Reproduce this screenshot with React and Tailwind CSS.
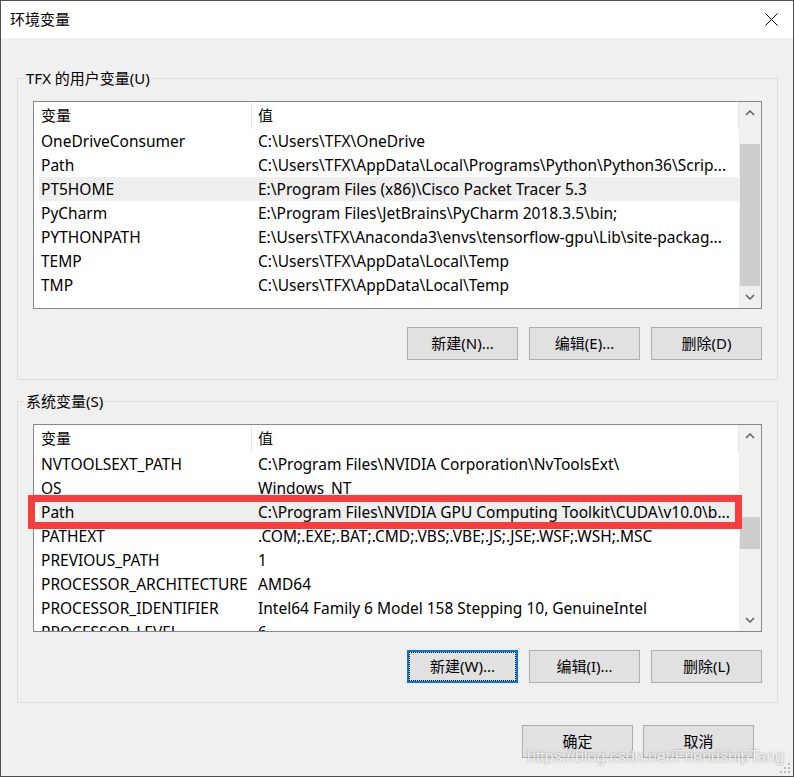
const userVars = [
  { name: "OneDriveConsumer", value: "C:\\Users\\TFX\\OneDrive" },
  { name: "Path", value: "C:\\Users\\TFX\\AppData\\Local\\Programs\\Python\\Python36\\Scrip..." },
  { name: "PT5HOME", value: "E:\\Program Files (x86)\\Cisco Packet Tracer 5.3", active: true },
  { name: "PyCharm", value: "E:\\Program Files\\JetBrains\\PyCharm 2018.3.5\\bin;" },
  { name: "PYTHONPATH", value: "E:\\Users\\TFX\\Anaconda3\\envs\\tensorflow-gpu\\Lib\\site-packag..." },
  { name: "TEMP", value: "C:\\Users\\TFX\\AppData\\Local\\Temp" },
  { name: "TMP", value: "C:\\Users\\TFX\\AppData\\Local\\Temp" },
];

const systemVars = [
  { name: "NVTOOLSEXT_PATH", value: "C:\\Program Files\\NVIDIA Corporation\\NvToolsExt\\" },
  { name: "OS", value: "Windows_NT" },
  { name: "Path", value: "C:\\Program Files\\NVIDIA GPU Computing Toolkit\\CUDA\\v10.0\\b...", active: true },
  { name: "PATHEXT", value: ".COM;.EXE;.BAT;.CMD;.VBS;.VBE;.JS;.JSE;.WSF;.WSH;.MSC" },
  { name: "PREVIOUS_PATH", value: "1" },
  { name: "PROCESSOR_ARCHITECTURE", value: "AMD64" },
  { name: "PROCESSOR_IDENTIFIER", value: "Intel64 Family 6 Model 158 Stepping 10, GenuineIntel" },
  { name: "PROCESSOR_LEVEL", value: "6" },
];

function Chevron({ down }) {
  return (
    <svg width="10" height="6" viewBox="0 0 10 6" className="text-[#606060]">
      <polyline
        points={down ? "1,1 5,5 9,1" : "1,5 5,1 9,5"}
        fill="none"
        stroke="currentColor"
        strokeWidth="1.5"
      />
    </svg>
  );
}

function Scrollbar({ offset, thumb }) {
  return (
    <div className="flex w-[22px] flex-col bg-[#f0f0f0]">
      <div className="flex h-[22px] items-center justify-center">
        <Chevron />
      </div>
      <div className={offset} />
      <div className={`mx-px bg-[#cdcdcd] ${thumb}`} />
      <div className="flex-1" />
      <div className="flex h-[22px] items-center justify-center">
        <Chevron down />
      </div>
    </div>
  );
}

function VarList({ rows, offset, thumb }) {
  return (
    <div className="flex h-[208px] overflow-hidden border border-[#828790] bg-white">
      <div className="flex min-w-0 flex-1 flex-col">
        {/* header */}
        <div className="flex h-[27px] shrink-0 border-r border-[#e5e5e5]">
          <div className="w-[217px] pl-[7px] leading-[27px]">变量</div>
          <div className="mt-px w-px bg-[#e5e5e5]" />
          <div className="flex-1 pl-[6px] leading-[27px]">值</div>
        </div>
        {rows.map((r) => (
          <div
            key={r.name}
            className={`ml-[5px] flex h-[24px] shrink-0 text-[15.5px] leading-[24px] ${r.active ? "bg-[#efefef]" : ""}`}
          >
            <div className="w-[212px] shrink-0 overflow-hidden whitespace-nowrap pl-[2px]">{r.name}</div>
            <div className="min-w-0 flex-1 overflow-hidden whitespace-nowrap pl-[7px]">{r.value}</div>
          </div>
        ))}
      </div>
      <Scrollbar offset={offset} thumb={thumb} />
    </div>
  );
}

function Button({ children, focused, className = "" }) {
  if (focused) {
    return (
      <div className={`h-[33px] w-[111px] border-2 border-[#0078d7] bg-[#e1e1e1] p-px ${className}`}>
        <div className="flex h-full items-center justify-center outline-1 outline-dotted outline-black">
          {children}
        </div>
      </div>
    );
  }
  return (
    <div className={`flex h-[33px] w-[111px] items-center justify-center border border-[#adadad] bg-[#e1e1e1] ${className}`}>
      {children}
    </div>
  );
}

function Group({ title, children, className = "" }) {
  return (
    <div className={`relative border border-[#dcdcdc] px-[15px] pt-[22px] pb-[19px] ${className}`}>
      <span className="absolute -top-[11px] left-[6px] bg-[#f0f0f0] px-[2px] leading-[20px]">{title}</span>
      {children}
    </div>
  );
}

export default function App() {
  return (
    <div className="relative flex h-[777px] w-[794px] flex-col border border-[#4f4f4f] bg-[#f0f0f0] text-[15px] text-black font-['Noto_Sans','Noto_Sans_CJK_SC',sans-serif]">
      {/* title bar */}
      <div className="flex h-[37px] shrink-0 items-center justify-between bg-white pl-[9px] pr-[15px]">
        <span>环境变量</span>
        <svg width="13" height="13" viewBox="0 0 13 13">
          <path d="M0.5 0.5 L12.5 12.5 M12.5 0.5 L0.5 12.5" stroke="#000" strokeWidth="1" />
        </svg>
      </div>

      <div className="flex flex-1 flex-col pl-[16px] pr-[15px]">
        <Group title="TFX 的用户变量(U)" className="mt-[40px]">
          <VarList rows={userVars} offset="h-[20px]" thumb="h-[142px]" />
          <div className="mt-[18px] flex justify-end gap-[11px]">
            <Button>新建(N)...</Button>
            <Button>编辑(E)...</Button>
            <Button>删除(D)</Button>
          </div>
        </Group>

        <Group title="系统变量(S)" className="mt-[21px]">
          <VarList rows={systemVars} offset="h-[70px]" thumb="h-[32px]" />
          <div className="mt-[18px] flex justify-end gap-[11px]">
            <Button focused>新建(W)...</Button>
            <Button>编辑(I)...</Button>
            <Button>删除(L)</Button>
          </div>
        </Group>

        <div className="mt-[22px] mr-[24px] flex justify-end gap-[10px]">
          <Button>确定</Button>
          <Button>取消</Button>
        </div>
      </div>

      {/* red annotation box */}
      <div className="absolute top-[494px] left-[27px] h-[34px] w-[714px] border-[7px] border-[#f93c3c]" />

      {/* watermark */}
      <div className="absolute top-[747px] left-[526px] text-[16px] leading-[18px] whitespace-nowrap text-white/85 font-['Liberation_Sans',Arial,sans-serif] [text-shadow:0_0_2px_rgba(0,0,0,0.45)]">
        https://blog.csdn.net/FriendshipTang
      </div>

      {/* size grip */}
      <svg className="absolute right-[2px] bottom-[2px]" width="12" height="12" viewBox="0 0 12 12">
        <g fill="#bcbcbc">
          <rect x="9" y="1" width="2" height="2" />
          <rect x="5" y="5" width="2" height="2" />
          <rect x="9" y="5" width="2" height="2" />
          <rect x="1" y="9" width="2" height="2" />
          <rect x="5" y="9" width="2" height="2" />
          <rect x="9" y="9" width="2" height="2" />
        </g>
      </svg>
    </div>
  );
}
